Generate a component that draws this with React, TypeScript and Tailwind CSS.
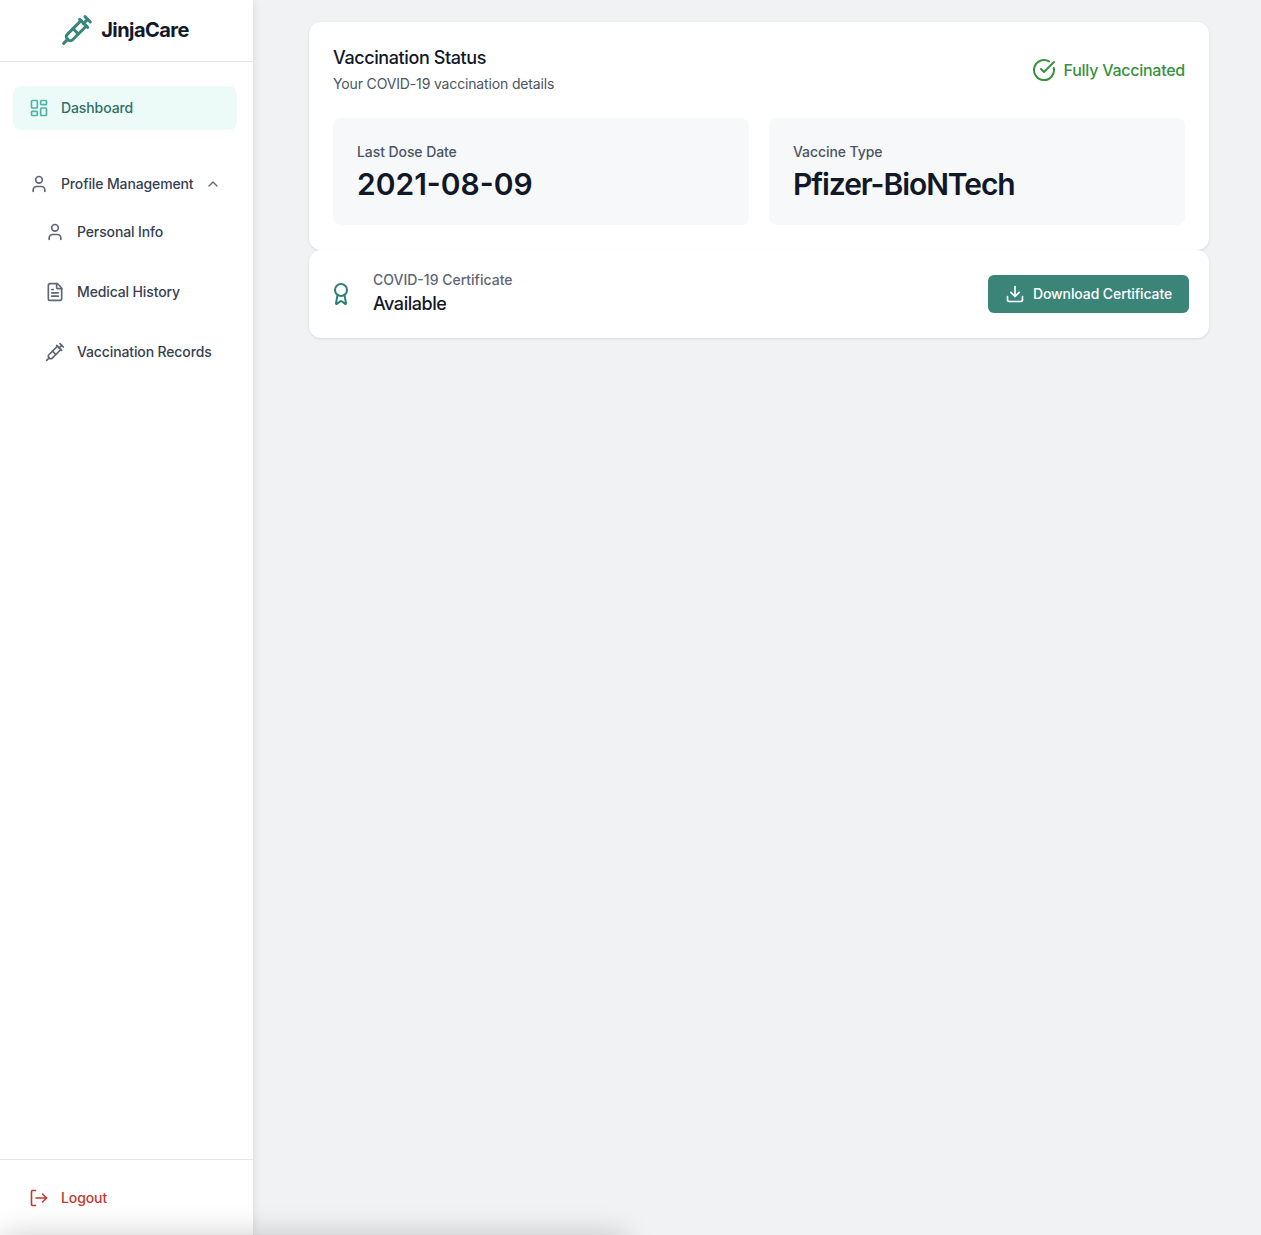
import React from 'react';
import { Award, ChevronUp, CircleCheckBig, Download, FileText, LayoutDashboard, Syringe, User } from 'lucide-react';

const font = { fontFamily: 'Inter, "Noto Sans", sans-serif' };

function SubItem({ icon, label }: { icon: React.ReactNode; label: string }) {
  return (
    <div className="flex h-11 items-center gap-[12px] pl-[45px] text-sm font-medium tracking-[-0.13px] text-[#374151]">
      <span className="flex w-5 justify-center text-[#5f6675]">{icon}</span>
      <span>{label}</span>
    </div>
  );
}

function InfoTile({ label, value, tight }: { label: string; value: string; tight?: boolean }) {
  return (
    <div className="h-[107px] flex-1 rounded-lg bg-[#f7f8fa] px-6 pt-[24px]">
      <div className="text-sm font-medium leading-5 tracking-[-0.08px] text-[#4b5563]">{label}</div>
      <div className={tight ? 'mt-[4px] text-[30px] font-semibold leading-9 tracking-[-1.07px] text-[#111827]' : 'mt-[4px] text-[30px] font-semibold leading-9 text-[#111827]'}>
        {value}
      </div>
    </div>
  );
}

export default function App() {
  return (
    <div style={font} className="relative flex h-[1235px] overflow-hidden bg-[#f0f2f4]">
      {/* Sidebar */}
      <aside className="z-10 flex w-[253px] shrink-0 flex-col bg-white shadow-[0_0_10px_rgba(0,0,0,0.1)]">
        <div className="flex h-[62px] items-center justify-center gap-2 border-b border-[#e5e7eb] pb-[2px] pr-[3px]">
          <Syringe className="h-[32px] w-[32px] text-[#38857a]" strokeWidth={2.25} />
          <span className="text-xl font-bold tracking-[-0.55px] text-[#111827]">JinjaCare</span>
        </div>

        <nav className="flex-1 pl-[13px] pr-4 pt-6">
          <div className="flex h-11 items-center gap-[12px] rounded-lg bg-[#edfbf8] pl-[16px] text-sm font-medium tracking-[-0.1px] text-[#2f6f66]">
            <LayoutDashboard className="h-5 w-5 text-[#4fb3a3]" strokeWidth={2} />
            <span>Dashboard</span>
          </div>

          <div className="mt-8 flex h-11 items-center pl-[16px] text-sm font-medium tracking-[-0.13px] text-[#374151]">
            <User className="h-5 w-5 text-[#5f6675]" strokeWidth={2} />
            <span className="ml-[12px]">Profile Management</span>
            <ChevronUp className="ml-[12px] h-4 w-4 text-[#5f6675]" strokeWidth={2} />
          </div>

          <div className="-ml-[13px] mt-[4px] flex flex-col gap-4">
            <SubItem icon={<User className="h-5 w-5" strokeWidth={2} />} label="Personal Info" />
            <SubItem icon={<FileText className="h-5 w-5" strokeWidth={2} />} label="Medical History" />
            <SubItem icon={<Syringe className="h-5 w-5" strokeWidth={2} />} label="Vaccination Records" />
          </div>
        </nav>

        <div className="h-[76px] border-t border-[#e5e7eb] px-[29px] pt-[28px]">
          <div className="flex h-5 items-center gap-[12px] text-sm font-medium tracking-[-0.1px] text-[#c5372c]">
            <svg width="20" height="20" viewBox="0 0 20 20" fill="none" stroke="currentColor" strokeWidth="1.6" strokeLinecap="round" strokeLinejoin="round">
              <path d="M6.5 2.5H3.5a1 1 0 0 0-1 1v13a1 1 0 0 0 1 1h3" />
              <path d="M7 10h10.5" />
              <path d="M13.5 6l4 4-4 4" />
            </svg>
            <span>Logout</span>
          </div>
        </div>
      </aside>

      {/* Main content */}
      <main className="flex-1 pl-14 pr-[52px] pt-[22px]">
        <section className="rounded-xl bg-white px-6 pb-[25px] pt-[24px] shadow-[0_1px_3px_rgba(0,0,0,0.1)]">
          <div className="flex items-center justify-between">
            <div>
              <h2 className="text-lg font-medium leading-6 tracking-[-0.4px] text-[#111827]">Vaccination Status</h2>
              <p className="mt-[4px] text-sm leading-5 tracking-[-0.15px] text-[#4b5563]">Your COVID-19 vaccination details</p>
            </div>
            <div className="flex items-center gap-[7px] text-base font-medium tracking-[-0.25px] text-[#38913f]">
              <CircleCheckBig className="h-6 w-6" strokeWidth={2} />
              <span>Fully Vaccinated</span>
            </div>
          </div>
          <div className="mt-[24px] flex gap-5">
            <InfoTile label="Last Dose Date" value="2021-08-09" />
            <InfoTile label="Vaccine Type" value="Pfizer-BioNTech" tight />
          </div>
        </section>

        <section className="flex h-[88px] items-center justify-between rounded-xl bg-white pl-6 pr-5 shadow-[0_1px_3px_rgba(0,0,0,0.1)]">
          <div className="flex items-center gap-[20px]">
            <Award className="-ml-1 h-6 w-6 text-[#2d8074]" strokeWidth={2} />
            <div className="pb-[2px]">
              <div className="text-sm font-medium leading-5 text-[#5f6675]">COVID-19 Certificate</div>
              <div className="mt-[2px] text-lg font-medium leading-6 tracking-[-0.45px] text-[#111827]">Available</div>
            </div>
          </div>
          <button className="flex h-[38px] w-[201px] items-center justify-center gap-2 rounded-md bg-[#3b8578] text-sm font-medium tracking-[-0.1px] text-white">
            <Download className="h-5 w-5" strokeWidth={2} />
            <span>Download Certificate</span>
          </button>
        </section>
      </main>

      {/* Shadow of something just below the fold */}
      <div className="absolute bottom-[-30px] left-0 z-20 h-[30px] w-[625px] shadow-[0_0_30px_rgba(0,0,0,0.2)]" />
    </div>
  );
}
